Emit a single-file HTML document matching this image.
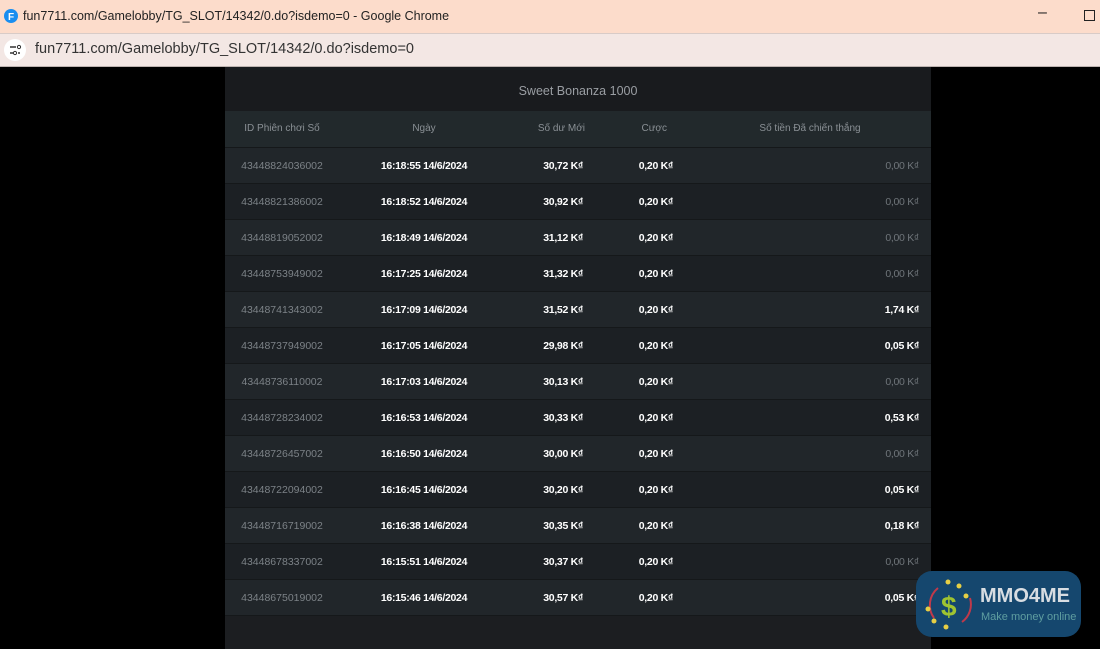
<!DOCTYPE html>
<html><head><meta charset="utf-8"><style>
body{margin:0;width:1100px;height:649px;background:#000;font-family:"Liberation Sans",sans-serif;position:relative;overflow:hidden}
.tb{position:absolute;left:0;top:0;width:1100px;height:33px;background:#fcdccb;font-size:12.5px;color:#222}
.ab{position:absolute;left:0;top:33px;width:1100px;height:32px;background:#f3e7e4;border-top:1px solid #d8cbc7;border-bottom:1px solid #bdb3b0;font-size:14.5px;color:#333}
.panel{position:absolute;left:225px;top:67px;width:706px;height:582px;background:#1c1e21}
.title{height:44px;line-height:48px;text-align:center;color:#9a9ea3;font-size:12.5px;background:#191b1e}
.row{position:relative;height:35px;border-bottom:1px solid #15181a;font-size:10.5px;font-weight:bold;color:#fff;letter-spacing:-0.3px}
.row span{position:absolute;top:0;line-height:36px}
.hd{height:36px;background:#22292c;color:#8a9095;font-weight:normal;font-size:10px;letter-spacing:0}
.a{background:#21262a}.b{background:#1c2024}
.id{left:0;width:114px;text-align:center;color:#7c8287;font-weight:normal;letter-spacing:0}
.d{left:124px;width:150px;text-align:center}
.s{right:348px}.c{right:258px}.w{right:12px}
.g{color:#6f757a;font-weight:normal}
</style></head><body>
<div class="tb"><svg style="position:absolute;left:4px;top:9px" width="14" height="14"><circle cx="7" cy="7" r="7" fill="#1a8ef0"/><text x="4" y="11" font-size="10" font-weight="bold" fill="#fff" font-family="Liberation Sans">F</text></svg><span style="position:absolute;left:23px;top:9px">fun7711.com/Gamelobby/TG_SLOT/14342/0.do?isdemo=0 - Google Chrome</span><span style="position:absolute;left:1038px;top:4px;font-size:16px">–</span><span style="position:absolute;left:1084px;top:10px;width:9px;height:9px;border:1px solid #222"></span></div>
<div class="ab"><svg style="position:absolute;left:4px;top:5px" width="22" height="22"><circle cx="11" cy="11" r="11" fill="#fff"/><path d="M6 8h6M6 14h3M14 14h2" stroke="#333" stroke-width="1.5"/><circle cx="15" cy="8" r="1.6" fill="none" stroke="#333"/><circle cx="11" cy="14" r="1.6" fill="none" stroke="#333"/></svg><span style="position:absolute;left:35px;top:7px">fun7711.com/Gamelobby/TG_SLOT/14342/0.do?isdemo=0</span></div>
<div class="panel">
<div class="title">Sweet Bonanza 1000</div>
<div class="row hd"><span class="id" style="color:#8a9095">ID Phiên chơi Số</span><span class="d">Ngày</span><span class="s" style="right:346px">Số dư Mới</span><span class="c" style="right:264px">Cược</span><span style="left:500px;width:170px;text-align:center">Số tiền Đã chiến thắng</span></div>
<div class="row a"><span class="id">43448824036002</span><span class="d">16:18:55 14/6/2024</span><span class="s">30,72 K₫</span><span class="c">0,20 K₫</span><span class="w g">0,00 K₫</span></div>
<div class="row b"><span class="id">43448821386002</span><span class="d">16:18:52 14/6/2024</span><span class="s">30,92 K₫</span><span class="c">0,20 K₫</span><span class="w g">0,00 K₫</span></div>
<div class="row a"><span class="id">43448819052002</span><span class="d">16:18:49 14/6/2024</span><span class="s">31,12 K₫</span><span class="c">0,20 K₫</span><span class="w g">0,00 K₫</span></div>
<div class="row b"><span class="id">43448753949002</span><span class="d">16:17:25 14/6/2024</span><span class="s">31,32 K₫</span><span class="c">0,20 K₫</span><span class="w g">0,00 K₫</span></div>
<div class="row a"><span class="id">43448741343002</span><span class="d">16:17:09 14/6/2024</span><span class="s">31,52 K₫</span><span class="c">0,20 K₫</span><span class="w">1,74 K₫</span></div>
<div class="row b"><span class="id">43448737949002</span><span class="d">16:17:05 14/6/2024</span><span class="s">29,98 K₫</span><span class="c">0,20 K₫</span><span class="w">0,05 K₫</span></div>
<div class="row a"><span class="id">43448736110002</span><span class="d">16:17:03 14/6/2024</span><span class="s">30,13 K₫</span><span class="c">0,20 K₫</span><span class="w g">0,00 K₫</span></div>
<div class="row b"><span class="id">43448728234002</span><span class="d">16:16:53 14/6/2024</span><span class="s">30,33 K₫</span><span class="c">0,20 K₫</span><span class="w">0,53 K₫</span></div>
<div class="row a"><span class="id">43448726457002</span><span class="d">16:16:50 14/6/2024</span><span class="s">30,00 K₫</span><span class="c">0,20 K₫</span><span class="w g">0,00 K₫</span></div>
<div class="row b"><span class="id">43448722094002</span><span class="d">16:16:45 14/6/2024</span><span class="s">30,20 K₫</span><span class="c">0,20 K₫</span><span class="w">0,05 K₫</span></div>
<div class="row a"><span class="id">43448716719002</span><span class="d">16:16:38 14/6/2024</span><span class="s">30,35 K₫</span><span class="c">0,20 K₫</span><span class="w">0,18 K₫</span></div>
<div class="row b"><span class="id">43448678337002</span><span class="d">16:15:51 14/6/2024</span><span class="s">30,37 K₫</span><span class="c">0,20 K₫</span><span class="w g">0,00 K₫</span></div>
<div class="row a"><span class="id">43448675019002</span><span class="d">16:15:46 14/6/2024</span><span class="s">30,57 K₫</span><span class="c">0,20 K₫</span><span class="w">0,05 K₫</span></div>
</div>
<div style="position:absolute;left:916px;top:571px;width:165px;height:66px;border-radius:16px;background:#15476e">
<svg style="position:absolute;left:4px;top:5px" width="60" height="58"><path d="M18 12 A22 22 0 0 0 14 42" stroke="#c0394a" stroke-width="2" fill="none"/><path d="M42 46 A22 22 0 0 0 50 22" stroke="#c0394a" stroke-width="2" fill="none"/><text x="21" y="40" font-size="28" font-weight="bold" fill="#9fc431" font-family="Liberation Sans">$</text><g fill="#e6cf45"><circle cx="28" cy="6" r="2.5"/><circle cx="39" cy="10" r="2.5"/><circle cx="46" cy="20" r="2.5"/><circle cx="8" cy="33" r="2.5"/><circle cx="14" cy="45" r="2.5"/><circle cx="26" cy="51" r="2.5"/></g></svg>
<span style="position:absolute;left:64px;top:14px;color:#d8dde2;font-weight:bold;font-size:20px">MMO4ME</span>
<span style="position:absolute;left:65px;top:40px;color:#5f9ea0;font-size:11px">Make money online</span></div>
</body></html>
